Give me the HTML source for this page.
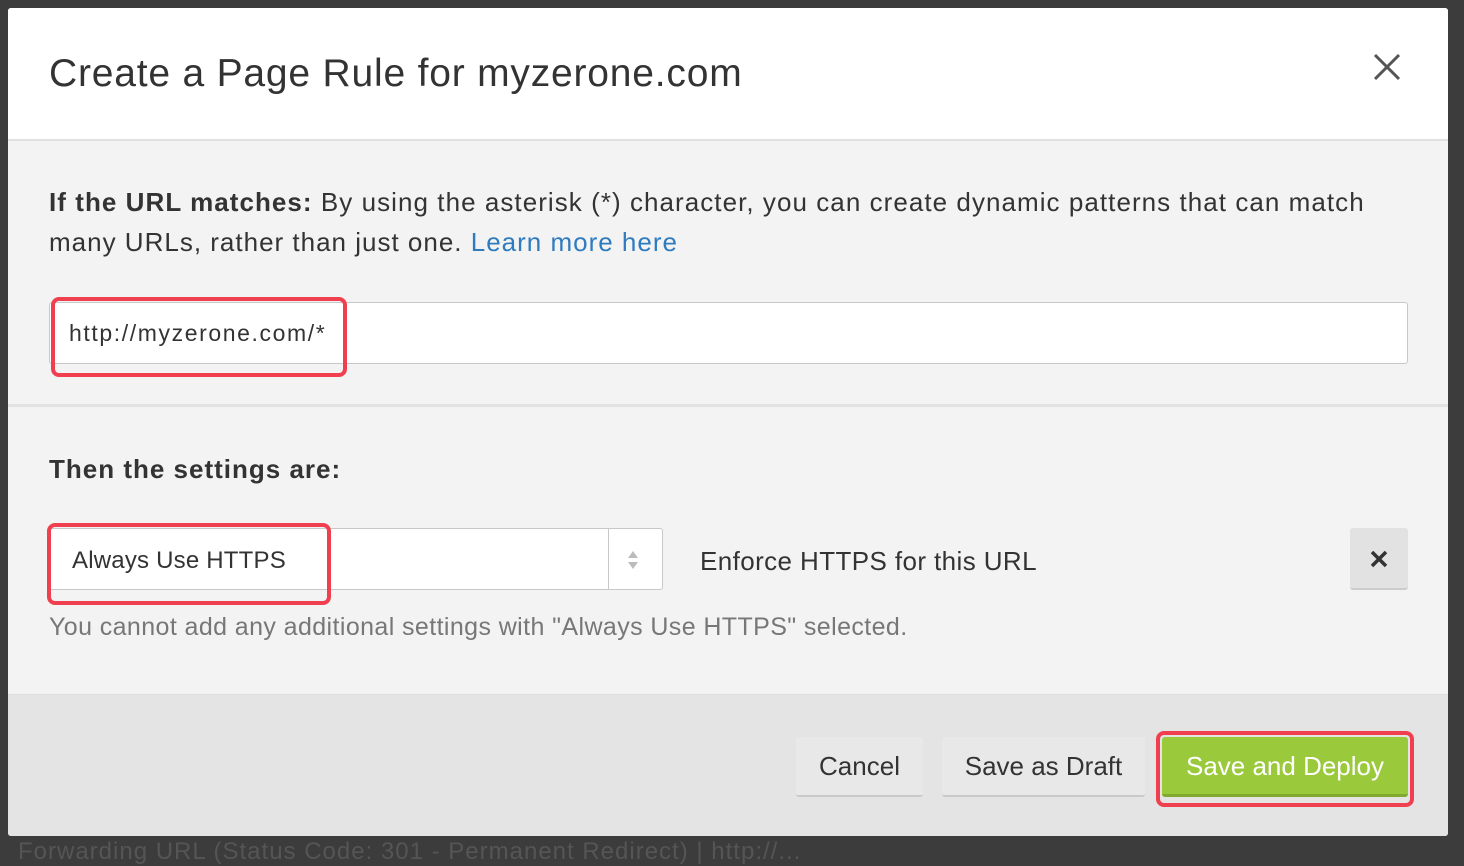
<!DOCTYPE html>
<html><head><style>
*{box-sizing:border-box;margin:0;padding:0}
body{width:1464px;height:852px;background:#3c3c3c;font-family:"Liberation Sans",sans-serif;position:relative;overflow:hidden;color:#333}
.bgtxt{position:absolute;left:18px;top:838px;color:#555;font-size:24px;white-space:nowrap;letter-spacing:1px}
.modal{position:absolute;left:8px;top:8px;width:1440px;height:828px;background:#f3f3f3;border-radius:3px;overflow:hidden}
.hdr{position:absolute;left:0;top:0;width:100%;height:133px;background:#fff;border-bottom:2px solid #e0e0e0}
.hdr h1{position:absolute;left:41px;top:44px;font-size:39px;font-weight:normal;color:#333;letter-spacing:0.8px}
.close{position:absolute;left:1364px;top:44px;width:30px;height:30px}
.t{position:absolute;font-size:26px;white-space:nowrap}
.inp{position:absolute;left:41px;top:294px;width:1359px;height:62px;background:#fff;border:1px solid #c8c8c8;border-radius:3px}
.div{position:absolute;left:0;top:396px;width:100%;height:3px;background:#e2e2e2}
.sel{position:absolute;left:41px;top:520px;width:614px;height:62px;background:#fff;border:1px solid #c8c8c8;border-radius:3px}
.arr{position:absolute;left:600px;top:520px;width:1px;height:62px;background:#c8c8c8}
.xbtn{position:absolute;left:1342px;top:520px;width:58px;height:62px;background:#e2e2e2;border-radius:3px;border-bottom:2px solid #ccc}
.ftr{position:absolute;left:0;top:686px;width:100%;height:142px;background:#e4e4e4;border-top:1px solid #ddd}
.btn{position:absolute;top:729px;height:60px;background:#e8e8e8;border-radius:3px;border-bottom:2px solid #c9c9c9;font-size:26px;color:#333;text-align:center;line-height:58px}
.red{position:absolute;border:4px solid #f0404f;border-radius:8px}
</style></head><body>
<div class="bgtxt">Forwarding URL (Status Code: 301 - Permanent Redirect) | http://...</div>
<div class="modal">
 <div class="hdr"><h1>Create a Page Rule for myzerone.com</h1>
  <svg class="close" viewBox="0 0 30 30"><path d="M3 3L27 27M27 3L3 27" stroke="#555" stroke-width="3"/></svg></div>
 <div class="t" style="left:41px;top:179px;letter-spacing:1.05px">
  <b>If the URL matches:</b> By using the asterisk (*) character, you can create dynamic patterns that can match</div>
 <div class="t" style="left:41px;top:219px;letter-spacing:1px">many URLs, rather than just one. <span style="color:#2f7bbf">Learn more here</span></div>
 <div class="inp"></div>
 <div class="t" style="left:61px;top:312px;font-size:23px;letter-spacing:1.6px">http://myzerone.com/*</div>
 <div class="div"></div>
 <div class="t" style="left:41px;top:446px;font-weight:bold;letter-spacing:1px">Then the settings are:</div>
 <div class="sel"></div><div class="arr"></div>
 <svg style="position:absolute;left:618px;top:542px" width="14" height="20" viewBox="0 0 14 20"><path d="M7 1L12 8H2Z M7 19L12 12H2Z" fill="#bbb"/></svg>
 <div class="t" style="left:64px;top:539px;font-size:24px;letter-spacing:0.2px">Always Use HTTPS</div>
 <div class="t" style="left:692px;top:538px;letter-spacing:0.4px">Enforce HTTPS for this URL</div>
 <div class="xbtn"><svg style="position:absolute;left:20px;top:22px" width="18" height="18" viewBox="0 0 18 18"><path d="M2 2L16 16M16 2L2 16" stroke="#333" stroke-width="3.5"/></svg></div>
 <div class="t" style="left:41px;top:605px;color:#777;font-size:25px;letter-spacing:0.4px">You cannot add any additional settings with "Always Use HTTPS" selected.</div>
 <div class="ftr"></div>
 <div class="btn" style="left:788px;width:127px">Cancel</div>
 <div class="btn" style="left:934px;width:203px">Save as Draft</div>
 <div class="btn" style="left:1154px;width:246px;background:#9bc93c;color:#fff;border-bottom:3px solid #80a92d">Save and Deploy</div>
 <div class="red" style="left:43px;top:289px;width:296px;height:80px"></div>
 <div class="red" style="left:39px;top:515px;width:284px;height:82px"></div>
 <div class="red" style="left:1148px;top:723px;width:258px;height:76px"></div>
</div>
</body></html>
